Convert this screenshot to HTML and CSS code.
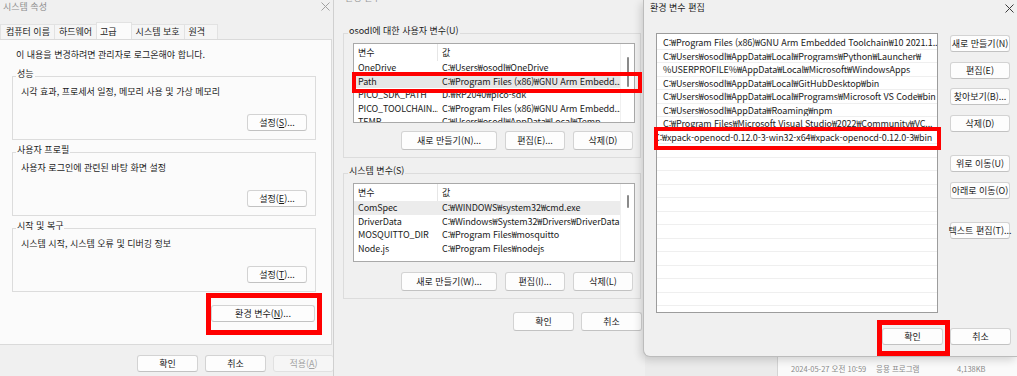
FILE: index.html
```html
<!DOCTYPE html>
<html lang="ko">
<head>
<meta charset="utf-8">
<title>환경 변수</title>
<link rel="stylesheet" href="styles.css">
</head>
<body>
<div class="desk">

  <div class="explorer">
    <div class="ex-side"></div>
    <div class="ex-main">
      <div class="ex-row"><span class="ex-date">2024-05-27 오전 10:59</span><span class="ex-type">응용 프로그램</span><span>4,138KB</span></div>
    </div>
  </div>

  <section class="win sys">
    <div class="sys-title">
      <span>시스템 속성</span>
      <svg class="xicon" width="9" height="9" viewBox="0 0 9 9"><path d="M0.5 0.5L8.5 8.5M8.5 0.5L0.5 8.5" stroke="#a0a0a0" stroke-width="1" fill="none"/></svg>
    </div>
    <div class="tabs">
      <div class="tab">컴퓨터 이름</div>
      <div class="tab">하드웨어</div>
      <div class="tab active">고급</div>
      <div class="tab">시스템 보호</div>
      <div class="tab last">원격</div>
    </div>
    <div class="sys-panel">
      <p class="note">이 내용을 변경하려면 관리자로 로그온해야 합니다.</p>
      <div class="group first">
        <span class="g-label">성능</span>
        <p class="g-text">시각 효과, 프로세서 일정, 메모리 사용 및 가상 메모리</p>
        <div class="g-actions"><button class="btn btn-set">설정(<u>S</u>)...</button></div>
      </div>
      <div class="group">
        <span class="g-label">사용자 프로필</span>
        <p class="g-text">사용자 로그인에 관련된 바탕 화면 설정</p>
        <div class="g-actions"><button class="btn btn-set">설정(<u>E</u>)...</button></div>
      </div>
      <div class="group">
        <span class="g-label">시작 및 복구</span>
        <p class="g-text">시스템 시작, 시스템 오류 및 디버깅 정보</p>
        <div class="g-actions"><button class="btn btn-set">설정(<u>T</u>)...</button></div>
      </div>
      <div class="env-row"><button class="btn btn-env">환경 변수(<u>N</u>)...</button></div>
    </div>
    <div class="sys-foot">
      <button class="btn btn-foot">확인</button>
      <button class="btn btn-foot">취소</button>
      <button class="btn btn-foot" disabled>적용(<u>A</u>)</button>
    </div>
  </section>

  <section class="win env">
    <div class="env-title">환경 변수</div>
    <div class="env-body">
      <div class="env-group g-user">
        <span class="g-label">osodl에 대한 사용자 변수(U)</span>
        <div class="lv lv-user">
          <div class="lv-main">
            <div class="lv-head"><span class="c1">변수</span><span class="c2">값</span></div>
            <div class="lv-row"><span class="c1">OneDrive</span><span class="c2">C:₩Users₩osodl₩OneDrive</span></div>
            <div class="lv-row sel"><span class="c1">Path</span><span class="c2">C:₩Program Files (x86)₩GNU Arm Embedd...</span></div>
            <div class="lv-row"><span class="c1">PICO_SDK_PATH</span><span class="c2">D:₩RP2040₩pico-sdk</span></div>
            <div class="lv-row"><span class="c1">PICO_TOOLCHAIN...</span><span class="c2">C:₩Program Files (x86)₩GNU Arm Embedd...</span></div>
            <div class="lv-row"><span class="c1">TEMP</span><span class="c2">C:₩Users₩osodl₩AppData₩Local₩Temp</span></div>
          </div>
          <div class="lv-scroll"><div class="thumb thumb-user"></div></div>
        </div>
        <div class="env-btns">
          <button class="btn btn-new">새로 만들기(N)...</button>
          <button class="btn btn-sm">편집(E)...</button>
          <button class="btn btn-sm">삭제(D)</button>
        </div>
      </div>

      <div class="env-group g-sys">
        <span class="g-label">시스템 변수(S)</span>
        <div class="lv lv-sys">
          <div class="lv-main">
            <div class="lv-head"><span class="c1">변수</span><span class="c2">값</span></div>
            <div class="lv-row sel2"><span class="c1">ComSpec</span><span class="c2">C:₩WINDOWS₩system32₩cmd.exe</span></div>
            <div class="lv-row"><span class="c1">DriverData</span><span class="c2">C:₩Windows₩System32₩Drivers₩DriverData</span></div>
            <div class="lv-row"><span class="c1">MOSQUITTO_DIR</span><span class="c2">C:₩Program Files₩mosquitto</span></div>
            <div class="lv-row"><span class="c1">Node.js</span><span class="c2">C:₩Program Files₩nodejs</span></div>
          </div>
          <div class="lv-scroll"><div class="thumb thumb-sys"></div></div>
        </div>
        <div class="env-btns btns-sys">
          <button class="btn btn-new">새로 만들기(W)...</button>
          <button class="btn btn-sm">편집(I)...</button>
          <button class="btn btn-sm">삭제(L)</button>
        </div>
      </div>

      <div class="env-foot">
        <button class="btn btn-ok">확인</button>
        <button class="btn btn-ok">취소</button>
      </div>
    </div>
  </section>

  <section class="win edit">
    <div class="edit-title">
      <span>환경 변수 편집</span>
      <svg class="xicon xicon-dark" width="9" height="9" viewBox="0 0 9 9"><path d="M0.5 0.5L8.5 8.5M8.5 0.5L0.5 8.5" stroke="#3a3a3a" stroke-width="1" fill="none"/></svg>
    </div>
    <div class="edit-body">
      <div class="el">
        <div class="el-row">C:₩Program Files (x86)₩GNU Arm Embedded Toolchain₩10 2021.1...</div>
        <div class="el-row">C:₩Users₩osodl₩AppData₩Local₩Programs₩Python₩Launcher₩</div>
        <div class="el-row">%USERPROFILE%₩AppData₩Local₩Microsoft₩WindowsApps</div>
        <div class="el-row">C:₩Users₩osodl₩AppData₩Local₩GitHubDesktop₩bin</div>
        <div class="el-row">C:₩Users₩osodl₩AppData₩Local₩Programs₩Microsoft VS Code₩bin</div>
        <div class="el-row">C:₩Users₩osodl₩AppData₩Roaming₩npm</div>
        <div class="el-row">C:₩Program Files₩Microsoft Visual Studio₩2022₩Community₩VC...</div>
        <div class="el-row editing"><span class="edit-text">C:₩xpack-openocd-0.12.0-3-win32-x64₩xpack-openocd-0.12.0-3₩bin</span></div>
        <div class="el-row"></div><div class="el-row"></div><div class="el-row"></div>
        <div class="el-row"></div><div class="el-row"></div><div class="el-row"></div>
        <div class="el-row"></div><div class="el-row"></div><div class="el-row"></div>
        <div class="el-row"></div><div class="el-row"></div><div class="el-row"></div>
        <div class="el-row"></div>
      </div>
      <div class="eb-col">
        <button class="btn btn-side">새로 만들기(N)</button>
        <button class="btn btn-side gap10">편집(E)</button>
        <button class="btn btn-side gap9">찾아보기(B)...</button>
        <button class="btn btn-side gap10">삭제(D)</button>
        <button class="btn btn-side gap23">위로 이동(U)</button>
        <button class="btn btn-side gap10">아래로 이동(O)</button>
        <button class="btn btn-side gap23">텍스트 편집(T)...</button>
      </div>
    </div>
    <div class="edit-foot">
      <button class="btn btn-ok2">확인</button>
      <button class="btn btn-ok2">취소</button>
    </div>
  </section>

  <div class="mark mark-env"></div>
  <div class="mark mark-path"></div>
  <div class="mark mark-edit"></div>
  <div class="mark mark-ok"></div>
</div>
</body>
</html>
```

FILE: styles.css
```css
* { box-sizing: border-box; }
html, body { margin: 0; padding: 0; }
body {
  width: 1017px;
  height: 376px;
  overflow: hidden;
  font-family: "Noto Sans CJK KR", "Noto Sans", sans-serif;
  font-size: 9px;
  color: #1b1b1b;
  background: #f0f0f0;
}
p { margin: 0; }
button { font: inherit; color: inherit; margin: 0; padding: 0; }

.desk { position: relative; width: 1017px; height: 376px; overflow: hidden; }

.win { position: absolute; top: 0; background: #f0f0f0; }

/* generic button */
.btn {
  height: 17px;
  background: #fdfdfd;
  border: 1px solid #d3d3d3;
  border-bottom-color: #c2c2c2;
  border-radius: 3px;
  line-height: 15px;
  text-align: center;
  white-space: nowrap;
  overflow: hidden;
}
.btn[disabled] { color: #a3a3a3; background: #f6f6f6; border-color: #e1e1e1; }

.xicon { display: block; margin-top: 2px; }

/* ---------- left window: 시스템 속성 ---------- */
.sys { left: 0; width: 345px; height: 376px; z-index: 1; }
.sys-title {
  height: 22px;
  display: flex;
  justify-content: space-between;
  align-items: flex-start;
  padding: 0 15px 0 3px;
  line-height: 14px;
  color: #8f8f8f;
}
.tabs { display: flex; align-items: flex-end; height: 17px; }
.tab {
  height: 15px;
  line-height: 13px;
  padding: 0 4px;
  background: #f5f5f5;
  border: 1px solid #e2e2e2;
  border-bottom: none;
  margin-right: -1px;
  white-space: nowrap;
}
.tab:first-child { padding-left: 5px; }
.tab.active {
  height: 17px;
  line-height: 17px;
  background: #fbfbfb;
  padding: 0 14px 0 3px;
  position: relative;
  z-index: 1;
}
.tab.last { padding-right: 12px; }

.sys-panel {
  height: 306px;
  margin: 0 13px 0 -1px;
  background: #fbfbfb;
  border: 1px solid #dadada;
  padding: 8px 15px 0 12px;
}
.note { line-height: 14px; padding-left: 4px; }

.group {
  height: 64px;
  border: 1px solid #dcdcdc;
  padding: 0 8px;
  margin-top: 12px;
  display: flex;
  flex-direction: column;
}
.group.first { margin-top: 14px; }
.g-label {
  align-self: flex-start;
  margin: -10px 0 0 -5px;
  padding: 0 1px;
  line-height: 14px;
  background: #fbfbfb;
  white-space: nowrap;
}
.g-text { margin-top: 4px; line-height: 14px; }
.g-actions { display: flex; justify-content: flex-end; margin-top: 15px; }
.btn-set { width: 60px; }

.env-row { display: flex; justify-content: flex-end; margin-top: 13px; padding-right: 1px; }
.btn-env { width: 104px; }

.sys-foot { display: flex; justify-content: flex-end; gap: 7px; padding: 10px 11px 0 0; }
.btn-foot { width: 61px; }

/* ---------- middle window: 환경 변수 ---------- */
.env { left: 333px; width: 312px; height: 380px; z-index: 2; border-left: 1px solid #d0d0d0; }
.env-title { height: 14px; margin-top: -9px; line-height: 14px; padding-left: 11px; color: #9a9a9a; }
.env-body { padding: 28px 0 0 9px; }
.env-group {
  width: 298px;
  border: 1px solid #dcdcdc;
  padding: 0 5px 7px 9px;
  display: flex;
  flex-direction: column;
}
.env-group .g-label { background: #f0f0f0; }
.g-sys { margin-top: 15px; }

.lv {
  background: #fff;
  border: 1px solid #a9a9a9;
  display: flex;
  overflow: hidden;
  margin-top: 5px;
  letter-spacing: -0.1px;
}
.lv-user { height: 80px; }
.lv-sys { height: 79px; }
.lv-main { flex: 1; min-width: 0; }
.lv-head { height: 17px; line-height: 17px; display: flex; }
.lv-row { height: 13.5px; line-height: 13.5px; display: flex; }
.lv-row.sel { background: #e6e6e6; }
.lv-row.sel2 { background: #ececec; }
.c1 { width: 84px; flex: none; padding-left: 4px; white-space: nowrap; overflow: hidden; }
.c2 { flex: 1; min-width: 0; padding-left: 4px; white-space: nowrap; overflow: hidden; }
.lv-head .c1 { border-right: 1px solid #e6e6e6; }
.lv-scroll { width: 14px; flex: none; border-left: 1px solid #f0f0f0; }
.thumb { width: 2px; margin-left: 6px; background: #8a8a8a; border-radius: 1px; }
.thumb-user { margin-top: 13px; height: 30px; }
.thumb-sys { margin-top: 11px; height: 13px; }

.env-btns { display: flex; justify-content: flex-end; gap: 8px; margin-top: 8px; padding-right: 2px; }
.btns-sys { margin-top: 10px; }
.env-btns .btn { height: 19px; line-height: 17px; }
.btn-new { width: 96px; }
.btn-sm { width: 60px; }

.env-foot { width: 299px; display: flex; justify-content: flex-end; gap: 7px; margin-top: 13px; }
.btn-ok { width: 61px; height: 19px; line-height: 17px; }

/* ---------- right window: 환경 변수 편집 ---------- */
.edit {
  left: 643px;
  width: 374px;
  height: 357px;
  z-index: 3;
  border-left: 1px solid #bcbcbc;
  border-bottom: 1px solid #bcbcbc;
  border-bottom-left-radius: 7px;
  box-shadow: -2px 3px 9px rgba(0, 0, 0, 0.16);
}
.edit-title {
  height: 16px;
  display: flex;
  justify-content: space-between;
  align-items: flex-start;
  line-height: 16px;
  padding: 0 3px 0 6px;
}
.xicon-dark { margin-top: 4px; }
.edit-body { display: flex; gap: 12px; padding: 17px 6px 0 12px; }
.el {
  width: 282px;
  height: 280px;
  background: #fff;
  border: 1px solid #9c9c9c;
  padding-top: 2px;
  overflow: hidden;
  letter-spacing: -0.1px;
}
.el-row {
  height: 13.5px;
  line-height: 13px;
  border-bottom: 1px solid #efefef;
  padding-left: 6px;
  white-space: nowrap;
  overflow: hidden;
}
.el-row.editing { padding-left: 0; }
.edit-text { display: inline-block; margin-left: -3px; }

.eb-col { width: 60px; display: flex; flex-direction: column; padding-top: 2px; }
.btn-side { width: 60px; overflow: visible; display: flex; justify-content: center; }
.gap9 { margin-top: 9px; }
.gap10 { margin-top: 10px; }
.gap23 { margin-top: 23px; }

.edit-foot { display: flex; justify-content: flex-end; gap: 7px; padding: 15px 6px 0 0; }
.btn-ok2 { width: 61px; }

/* ---------- explorer behind ---------- */
.explorer {
  position: absolute;
  left: 644px;
  top: 330px;
  width: 373px;
  height: 46px;
  display: flex;
  z-index: 2;
}
.ex-side { width: 134px; background: #ebebeb; border-right: 1px solid #d4d4d4; }
.ex-main { flex: 1; background: #fafafa; display: flex; flex-direction: column; justify-content: flex-end; }
.ex-row { height: 14px; line-height: 14px; display: flex; color: #8a8a8a; padding-left: 13px; white-space: nowrap; font-size: 7.5px; }
.ex-date { width: 85px; }
.ex-type { width: 81px; }

/* ---------- red annotation boxes ---------- */
.mark { position: absolute; border: 4px solid #ff0000; z-index: 10; }
.mark-env { left: 206px; top: 293px; width: 116px; height: 42px; border-width: 5px; }
.mark-path { left: 352px; top: 72px; width: 290px; height: 21px; }
.mark-edit { left: 654px; top: 127px; width: 287px; height: 23px; }
.mark-ok { left: 877px; top: 320px; width: 73px; height: 36px; border-width: 5px; }
```
